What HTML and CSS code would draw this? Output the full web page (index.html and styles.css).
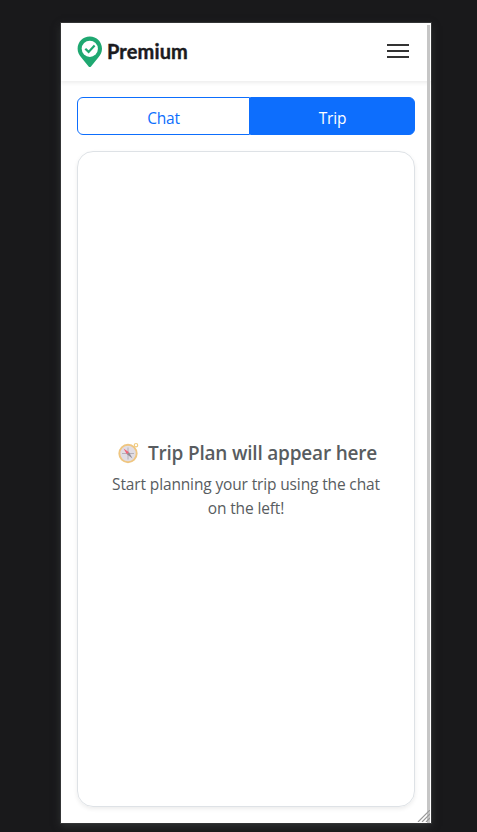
FILE: index.html
```html
<!DOCTYPE html>
<html lang="en">
<head>
<meta charset="utf-8">
<title>Premium</title>
<link rel="stylesheet" href="styles.css">
</head>
<body>
<div class="device">
  <header class="navbar">
    <div class="brand">
      <svg class="pin" width="26" height="32" viewBox="0 0 26 32">
        <path fill="#1fa871" d="M12.800.5C6 .5.6 5.900.6 12.800c0 3.500 1.500 6.200 3.700 8.800l7.300 8.800c.7.800 1.700.800 2.400 0l7.300-8.800c2.200-2.600 3.700-5.300 3.700-8.800C25 5.900 19.600.5 12.800.5z"/>
        <circle cx="12.800" cy="12.800" r="8.100" fill="#fff"/>
        <path d="M8.300 12.700l3.300 3.200 6-6.300" fill="none" stroke="#1fa871" stroke-width="2.200"/>
      </svg>
      <span class="brand-name">Premium</span>
    </div>
    <div class="menu"><i></i><i></i><i></i></div>
  </header>
  <main class="content">
    <div class="tabs">
      <div class="tab"><span>Chat</span></div>
      <div class="tab active"><span>Trip</span></div>
    </div>
    <section class="panel">
      <h1 class="title">
        <svg class="compass" width="22" height="22" viewBox="0 0 22 22">
          <circle cx="19" cy="3.200" r="1.700" fill="none" stroke="#f0cb80" stroke-width="1.200"/>
          <circle cx="11" cy="11.500" r="8.700" fill="#e1dde4" stroke="#efc681" stroke-width="1.900"/>
          <path d="M11 5.500v12M5 11.500h12" stroke="#b5b0b8" stroke-width="1"/>
          <path d="M6.500 6.500l5.600 3.700-2.200 2z" fill="#ee6478"/>
          <path d="M15.500 16.500l-5.600-4.300 2.200-2z" fill="#918d94"/>
        </svg>
        <span class="title-text">Trip Plan will appear here</span>
      </h1>
      <p class="hint">Start planning your trip using the chat<br>on the left!</p>
    </section>
  </main>
  <div class="scrollbar"></div>
  <svg class="grip" width="13" height="12" viewBox="0 0 13 12">
    <path d="M1 12L13 0M5 12l8-8M9 12l4-4" stroke="#999" stroke-width="1.200"/>
  </svg>
</div>
</body>
</html>
```
FILE: styles.css
```css
* { box-sizing: border-box; }
body {
  margin: 0;
  height: 832px;
  padding: 23px 0 0 61px;
  overflow: hidden;
  background: #19191b;
  font-family: "Open Sans", "Noto Sans", sans-serif;
}
.device {
  position: relative;
  display: flex;
  flex-direction: column;
  width: 370px;
  height: 800px;
  background: #fff;
  box-shadow: 0 0 0 1px #343536, 0 3px 8px #303334;
}
.navbar {
  display: flex;
  align-items: center;
  justify-content: space-between;
  height: 58px;
  padding: 0 22px 0 16px;
  box-shadow: 0 2px 4px rgba(0, 0, 0, .075);
}
.brand { display: flex; align-items: center; gap: 4px; }
.pin { display: block; }
.brand-name {
  font: 700 20px/24px Lato, sans-serif;
  letter-spacing: .15px;
  -webkit-text-stroke: .4px #1b1b1e;
  color: #1b1b1e;
  margin-bottom: 2px;
}
.menu { display: flex; flex-direction: column; gap: 4px; width: 22px; margin-bottom: 2px; }
.menu i { height: 2px; background: #333; }
.content {
  flex: 1;
  display: flex;
  flex-direction: column;
  gap: 16px;
  padding: 16px;
}
.tabs { display: flex; height: 38px; }
.tab {
  flex: 0 0 173px;
  display: flex;
  align-items: center;
  justify-content: center;
  border: 1px solid #0d6efd;
  border-radius: 6px 0 0 6px;
  color: #0d6efd;
  font-size: 15.500px;
  letter-spacing: -.2px;
  padding-top: 3px;
}
.tab.active { flex: 1; background: #0d6efd; color: #fff; border-radius: 0 6px 6px 0; }
.panel {
  flex: 1;
  display: flex;
  flex-direction: column;
  align-items: center;
  justify-content: center;
  gap: 7px;
  padding-top: 2px;
  border: 1px solid #dee2e6;
  border-radius: 16px;
  box-shadow: 0 2px 4px rgba(0, 0, 0, .075);
  color: #585c60;
}
.title {
  display: flex;
  align-items: center;
  gap: 9px;
  margin: 0;
  padding-left: 2px;
  font-size: 19px;
  line-height: 24px;
  letter-spacing: -.2px;
  font-weight: 600;
  white-space: nowrap;
}
.hint { margin: 0; font-size: 15.500px; letter-spacing: -.14px; line-height: 24px; text-align: center; white-space: nowrap; }
.scrollbar { position: absolute; top: 2px; right: 1px; bottom: 0; width: 3px; background: #c6c6c6; }
.grip { position: absolute; right: 1px; bottom: 1px; }
```
